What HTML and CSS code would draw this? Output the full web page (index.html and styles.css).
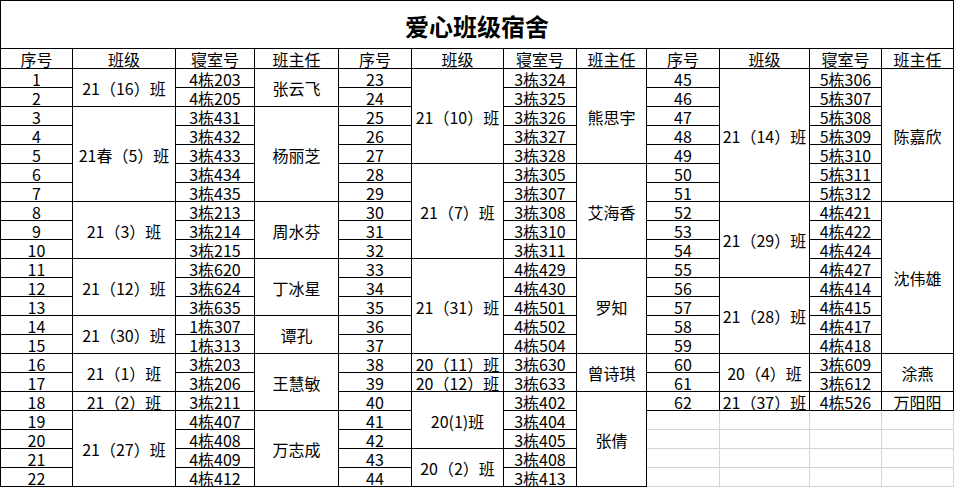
FILE: index.html
```html
<!DOCTYPE html>
<html lang="zh-CN">
<head>
<meta charset="utf-8">
<title>爱心班级宿舍</title>
<link rel="stylesheet" href="styles.css">
</head>
<body>
<div class="sheet">
  <div class="c title">爱心班级宿舍</div>

  <div class="c">序号</div><div class="c">班级</div><div class="c">寝室号</div><div class="c">班主任</div>
  <div class="c">序号</div><div class="c">班级</div><div class="c">寝室号</div><div class="c">班主任</div>
  <div class="c">序号</div><div class="c">班级</div><div class="c">寝室号</div><div class="c">班主任</div>

  <!-- row 1 -->
  <div class="c">1</div><div class="c r2">21（16）班</div><div class="c">4栋203</div><div class="c r2">张云飞</div>
  <div class="c">23</div><div class="c r5">21（10）班</div><div class="c">3栋324</div><div class="c r5">熊思宇</div>
  <div class="c">45</div><div class="c r7">21（14）班</div><div class="c">5栋306</div><div class="c r7">陈嘉欣</div>
  <!-- row 2 -->
  <div class="c">2</div><div class="c">4栋205</div>
  <div class="c">24</div><div class="c">3栋325</div>
  <div class="c">46</div><div class="c">5栋307</div>
  <!-- row 3 -->
  <div class="c">3</div><div class="c r5">21春（5）班</div><div class="c">3栋431</div><div class="c r5">杨丽芝</div>
  <div class="c">25</div><div class="c">3栋326</div>
  <div class="c">47</div><div class="c">5栋308</div>
  <!-- row 4 -->
  <div class="c">4</div><div class="c">3栋432</div>
  <div class="c">26</div><div class="c">3栋327</div>
  <div class="c">48</div><div class="c">5栋309</div>
  <!-- row 5 -->
  <div class="c">5</div><div class="c">3栋433</div>
  <div class="c">27</div><div class="c">3栋328</div>
  <div class="c">49</div><div class="c">5栋310</div>
  <!-- row 6 -->
  <div class="c">6</div><div class="c">3栋434</div>
  <div class="c">28</div><div class="c r5">21（7）班</div><div class="c">3栋305</div><div class="c r5">艾海香</div>
  <div class="c">50</div><div class="c">5栋311</div>
  <!-- row 7 -->
  <div class="c">7</div><div class="c">3栋435</div>
  <div class="c">29</div><div class="c">3栋307</div>
  <div class="c">51</div><div class="c">5栋312</div>
  <!-- row 8 -->
  <div class="c">8</div><div class="c r3">21（3）班</div><div class="c">3栋213</div><div class="c r3">周水芬</div>
  <div class="c">30</div><div class="c">3栋308</div>
  <div class="c">52</div><div class="c r4">21（29）班</div><div class="c">4栋421</div><div class="c r8">沈伟雄</div>
  <!-- row 9 -->
  <div class="c">9</div><div class="c">3栋214</div>
  <div class="c">31</div><div class="c">3栋310</div>
  <div class="c">53</div><div class="c">4栋422</div>
  <!-- row 10 -->
  <div class="c">10</div><div class="c">3栋215</div>
  <div class="c">32</div><div class="c">3栋311</div>
  <div class="c">54</div><div class="c">4栋424</div>
  <!-- row 11 -->
  <div class="c">11</div><div class="c r3">21（12）班</div><div class="c">3栋620</div><div class="c r3">丁冰星</div>
  <div class="c">33</div><div class="c r5">21（31）班</div><div class="c">4栋429</div><div class="c r5">罗知</div>
  <div class="c">55</div><div class="c">4栋427</div>
  <!-- row 12 -->
  <div class="c">12</div><div class="c">3栋624</div>
  <div class="c">34</div><div class="c">4栋430</div>
  <div class="c">56</div><div class="c r4">21（28）班</div><div class="c">4栋414</div>
  <!-- row 13 -->
  <div class="c">13</div><div class="c">3栋635</div>
  <div class="c">35</div><div class="c">4栋501</div>
  <div class="c">57</div><div class="c">4栋415</div>
  <!-- row 14 -->
  <div class="c">14</div><div class="c r2">21（30）班</div><div class="c">1栋307</div><div class="c r2">谭孔</div>
  <div class="c">36</div><div class="c">4栋502</div>
  <div class="c">58</div><div class="c">4栋417</div>
  <!-- row 15 -->
  <div class="c">15</div><div class="c">1栋313</div>
  <div class="c">37</div><div class="c">4栋504</div>
  <div class="c">59</div><div class="c">4栋418</div>
  <!-- row 16 -->
  <div class="c">16</div><div class="c r2">21（1）班</div><div class="c">3栋203</div><div class="c r3">王慧敏</div>
  <div class="c">38</div><div class="c">20（11）班</div><div class="c">3栋630</div><div class="c r2">曾诗琪</div>
  <div class="c">60</div><div class="c r2">20（4）班</div><div class="c">3栋609</div><div class="c r2">涂燕</div>
  <!-- row 17 -->
  <div class="c">17</div><div class="c">3栋206</div>
  <div class="c">39</div><div class="c">20（12）班</div><div class="c">3栋633</div>
  <div class="c">61</div><div class="c">3栋612</div>
  <!-- row 18 -->
  <div class="c">18</div><div class="c">21（2）班</div><div class="c">3栋211</div>
  <div class="c">40</div><div class="c r3">20(1)班</div><div class="c">3栋402</div><div class="c r5">张倩</div>
  <div class="c">62</div><div class="c">21（37）班</div><div class="c">4栋526</div><div class="c">万阳阳</div>
  <!-- row 19 -->
  <div class="c">19</div><div class="c r4">21（27）班</div><div class="c">4栋407</div><div class="c r4">万志成</div>
  <div class="c">41</div><div class="c">3栋404</div>
  <div class="c e"></div><div class="c e"></div><div class="c e"></div><div class="c e"></div>
  <!-- row 20 -->
  <div class="c">20</div><div class="c">4栋408</div>
  <div class="c">42</div><div class="c">3栋405</div>
  <div class="c e"></div><div class="c e"></div><div class="c e"></div><div class="c e"></div>
  <!-- row 21 -->
  <div class="c">21</div><div class="c">4栋409</div>
  <div class="c">43</div><div class="c r2">20（2）班</div><div class="c">3栋408</div>
  <div class="c e"></div><div class="c e"></div><div class="c e"></div><div class="c e"></div>
  <!-- row 22 -->
  <div class="c">22</div><div class="c">4栋412</div>
  <div class="c">44</div><div class="c">3栋413</div>
  <div class="c e"></div><div class="c e"></div><div class="c e"></div><div class="c e"></div>
</div>
</body>
</html>
```
FILE: styles.css
```css
html, body {
  margin: 0;
  padding: 0;
  background: #fff;
}

.sheet {
  display: grid;
  width: 954px;
  box-sizing: border-box;
  border-top: 1px solid #000;
  border-left: 1px solid #000;
  grid-template-columns: 72px 103px 79px 84px 73px 92px 73px 70px 73px 90px 72px 72px;
  grid-template-rows: 48px 20px repeat(22, 19px);
  font-family: "Noto Sans CJK SC", "Liberation Sans", sans-serif;
  font-size: 16px;
  color: #000;
}

.c {
  box-sizing: border-box;
  border-right: 1px solid #000;
  border-bottom: 1px solid #000;
  display: flex;
  align-items: center;
  justify-content: center;
  white-space: nowrap;
  line-height: 18px;
  padding-top: 1px;
}

.title {
  grid-column: 1 / -1;
  font-size: 24px;
  font-weight: bold;
  line-height: 30px;
  padding-top: 2px;
}

.r2 { grid-row: span 2; }
.r3 { grid-row: span 3; }
.r4 { grid-row: span 4; }
.r5 { grid-row: span 5; }
.r7 { grid-row: span 7; }
.r8 { grid-row: span 8; }

.e {
  border-right-color: #d4d4d4;
  border-bottom-color: #d4d4d4;
}
```
